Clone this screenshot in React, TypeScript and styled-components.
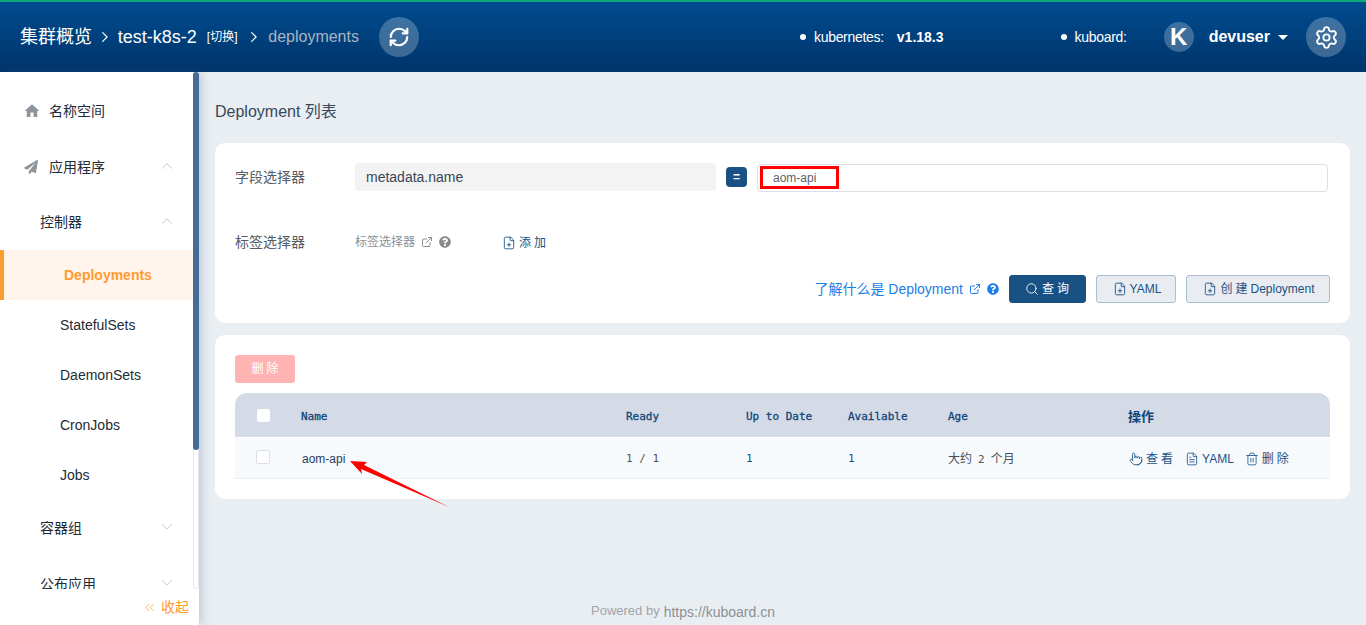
import React from 'react';
import styled, { createGlobalStyle } from 'styled-components';
import {
  ChevronDown,
  ChevronRight,
  ChevronUp,
  ChevronsLeft,
  ExternalLink,
  FilePlus,
  FileText,
  Pointer,
  RefreshCw,
  Search,
  Settings,
  Trash2,
} from 'lucide-react';
import { FaPaperPlane, FaQuestionCircle } from 'react-icons/fa';
import { MdHome } from 'react-icons/md';

const SANS = '"Liberation Sans", "Noto Sans CJK SC", sans-serif';
const MONO = '"DejaVu Sans Mono", "Noto Sans CJK SC", monospace';
const NAVY = '#1a5185';

const GlobalStyle = createGlobalStyle`
  html, body {
    margin: 0;
    padding: 0;
    height: 100%;
    overflow: hidden;
    font-family: ${SANS};
    line-height: 18px;
    background: #e9eef2;
  }
  #root {
    height: 100%;
  }
  button {
    line-height: inherit;
  }
`;

const Page = styled.div`
  width: 1366px;
  height: 625px;
  display: flex;
  flex-direction: column;
  overflow: hidden;
`;

const Header = styled.header`
  flex: none;
  height: 70px;
  border-top: 2px solid #0fa77b;
  background: linear-gradient(180deg, #004c90 0%, #00346a 100%);
  display: flex;
  align-items: center;
  padding: 0 20px;
  color: #fff;
`;

const Crumb = styled.span<{ $size?: number; $muted?: boolean; $gap?: number }>`
  font-size: ${(p) => p.$size ?? 18}px;
  color: ${(p) => (p.$muted ? '#a9b4c2' : '#fff')};
  margin-left: ${(p) => p.$gap ?? 0}px;
  white-space: nowrap;
`;

const CrumbArrow = styled(ChevronRight)<{ $gap: number }>`
  width: 18px;
  height: 18px;
  stroke-width: 1.6;
  margin-left: ${(p) => p.$gap}px;
  color: #fff;
`;

const RoundButton = styled.span<{ $size: number; $gap: number }>`
  flex: none;
  width: ${(p) => p.$size}px;
  height: ${(p) => p.$size}px;
  margin-left: ${(p) => p.$gap}px;
  border-radius: 50%;
  background: rgba(255, 255, 255, 0.24);
  display: flex;
  align-items: center;
  justify-content: center;
  font-size: 24px;
  font-weight: 700;
`;

const Status = styled.span<{ $gap: number }>`
  display: flex;
  align-items: center;
  margin-left: ${(p) => p.$gap}px;
  font-size: 14px;
  letter-spacing: -0.3px;
  white-space: nowrap;
  &::before {
    content: '';
    width: 6px;
    height: 6px;
    border-radius: 50%;
    background: #fff;
    margin-right: 8px;
  }
`;

const Version = styled.b`
  margin-left: 13px;
  letter-spacing: 0;
`;

const UserName = styled.b`
  margin-left: 15px;
  font-size: 16px;
`;

const Caret = styled.i`
  width: 0;
  height: 0;
  margin: 0 0 0 8px;
  border-left: 5px solid transparent;
  border-right: 5px solid transparent;
  border-top: 5px solid #fff;
`;

const Body = styled.div`
  flex: 1;
  min-height: 0;
  display: flex;
`;

const Sidebar = styled.aside`
  flex: none;
  width: 199px;
  position: relative;
  z-index: 1;
  display: flex;
  flex-direction: column;
  background: #fff;
  box-shadow: 3px 0 8px rgba(70, 108, 150, 0.25);
`;

const MenuScroll = styled.nav`
  flex: 1;
  min-height: 0;
  overflow: hidden;
  padding: 11px 6px 0 0;
`;

const ScrollTrack = styled.div`
  position: absolute;
  top: 0;
  right: 0;
  width: 6px;
  height: 517px;
  box-sizing: border-box;
  border: 1px solid #e6e9ee;
  border-top: 0;
  border-radius: 0 0 3px 3px;
`;

const ScrollThumb = styled.div`
  position: absolute;
  top: 0;
  left: -1px;
  right: -1px;
  height: 378px;
  background: #456c96;
  border-radius: 3px;
`;

const MenuRow = styled.div<{ $indent: number; $height?: number; $lift?: number }>`
  height: ${(p) => p.$height ?? 56}px;
  box-sizing: border-box;
  display: flex;
  align-items: center;
  padding-left: ${(p) => p.$indent}px;
  padding-bottom: ${(p) => p.$lift ?? 0}px;
  font-size: 14px;
  color: #222b36;
  white-space: nowrap;
`;

const MenuIcon = styled.span`
  width: 25px;
  display: flex;
  align-items: center;
  color: #8f959c;
`;

const MenuToggle = styled.span`
  margin: 0 17px 3px auto;
  display: flex;
  color: #a9b2bd;
  svg {
    width: 18px;
    height: 18px;
    stroke-width: 1;
  }
`;

const SubItem = styled.div<{ $active?: boolean }>`
  height: 50px;
  box-sizing: border-box;
  display: flex;
  align-items: center;
  font-size: 14px;
  padding-left: 60px;
  color: ${(p) => (p.$active ? '#ff9a2e' : '#222b36')};
  font-weight: ${(p) => (p.$active ? 700 : 400)};
  background: ${(p) => (p.$active ? '#fff5ec' : 'transparent')};
  border-left: ${(p) => (p.$active ? '4px solid #ff9a2e' : '0')};
`;

const Collapse = styled.div`
  flex: none;
  height: 36px;
  box-sizing: border-box;
  padding: 0 10px 0 0;
  display: flex;
  align-items: center;
  justify-content: flex-end;
  gap: 4px;
  font-size: 14px;
  color: #ff9a2e;
  svg {
    width: 15px;
    height: 15px;
    stroke-width: 1.2;
  }
`;

const Main = styled.main`
  flex: 1;
  min-width: 0;
  display: flex;
  flex-direction: column;
  padding: 0 16px;
`;

const PageTitle = styled.h1`
  margin: 0;
  height: 71px;
  box-sizing: border-box;
  padding-top: 9px;
  display: flex;
  align-items: center;
  font-size: 16px;
  font-weight: 400;
  color: #38495c;
`;

const Card = styled.section<{ $height: number }>`
  height: ${(p) => p.$height}px;
  box-sizing: border-box;
  padding: 20px;
  margin-bottom: 12px;
  background: #fff;
  border-radius: 10px;
`;

const FieldRow = styled.div`
  display: flex;
  align-items: center;
  height: 28px;
`;

const FormLabel = styled.span`
  width: 120px;
  flex: none;
  font-size: 14px;
  color: #555c66;
`;

const ReadonlyField = styled.div`
  width: 361px;
  height: 28px;
  box-sizing: border-box;
  padding-left: 11px;
  display: flex;
  align-items: center;
  border-radius: 4px;
  background: #f3f3f3;
  font-size: 14px;
  color: #3a4656;
`;

const EqualBadge = styled.span`
  width: 21px;
  height: 20px;
  margin-left: 10px;
  border-radius: 4px;
  background: ${NAVY};
  color: #fff;
  font-size: 12px;
  font-weight: 700;
  display: flex;
  align-items: center;
  justify-content: center;
`;

const ValueInput = styled.div`
  position: relative;
  flex: 1;
  height: 28px;
  margin: 1px 2px 0 10px;
  box-sizing: border-box;
  padding-left: 15px;
  display: flex;
  align-items: center;
  border: 1px solid #dcdfe6;
  border-radius: 4px;
  font-size: 12px;
  color: #606266;
`;

const RedMark = styled.span`
  position: absolute;
  left: 2px;
  top: 1px;
  width: 79px;
  height: 23px;
  box-sizing: border-box;
  border: 3px solid #f00;
`;

const SelectorRow = styled.div`
  display: flex;
  align-items: center;
  height: 28px;
  margin-top: 37px;
`;

const HintLink = styled.span`
  display: flex;
  align-items: center;
  gap: 6px;
  font-size: 12px;
  color: #8a8f96;
  svg {
    width: 12px;
    height: 12px;
  }
`;

const AddLink = styled.span`
  display: flex;
  align-items: center;
  gap: 3px;
  margin-left: 51px;
  padding-top: 2px;
  font-size: 12px;
  letter-spacing: 3px;
  color: ${NAVY};
  svg {
    width: 14px;
    height: 14px;
    stroke-width: 1.5;
  }
`;

const ActionRow = styled.div`
  display: flex;
  align-items: center;
  justify-content: flex-end;
  height: 28px;
  margin-top: 19px;
`;

const LearnLink = styled.span`
  display: flex;
  align-items: center;
  gap: 6px;
  font-size: 14px;
  color: #1a7fe8;
  svg {
    width: 12px;
    height: 12px;
  }
`;

const Button = styled.button<{ $primary?: boolean; $width: number; $gap?: number }>`
  width: ${(p) => p.$width}px;
  height: 28px;
  margin-left: ${(p) => p.$gap ?? 10}px;
  padding: 0 0 0 2px;
  box-sizing: border-box;
  display: flex;
  align-items: center;
  justify-content: center;
  gap: 3px;
  font-family: ${SANS};
  font-size: 12px;
  border-radius: 3px;
  border: 1px solid ${(p) => (p.$primary ? NAVY : '#a9bdd1')};
  background: ${(p) => (p.$primary ? NAVY : '#e9edf1')};
  color: ${(p) => (p.$primary ? '#fff' : NAVY)};
  svg {
    width: 14px;
    height: 14px;
    stroke-width: 1.5;
  }
`;

const Spaced = styled.span`
  letter-spacing: 3px;
`;

const DeleteButton = styled.button`
  display: block;
  width: 60px;
  height: 28px;
  padding: 0 0 1px 3px;
  border: 0;
  border-radius: 3px;
  background: #ffb3b3;
  color: #fff;
  font-family: ${SANS};
  font-size: 12px;
  letter-spacing: 3px;
`;

const TableGrid = styled.div`
  display: grid;
  grid-template-columns: 66px 325px 120px 102px 100px 180px 1fr;
  align-items: center;
`;

const TableHead = styled(TableGrid)`
  height: 44px;
  box-sizing: border-box;
  padding-top: 4px;
  margin-top: 10px;
  border-radius: 12px 12px 0 0;
  background: #d4dbe6;
  font-family: ${MONO};
  font-size: 11px;
  color: #12457a;
  -webkit-text-stroke: 0.3px #12457a;
`;

const TableRow = styled(TableGrid)`
  height: 41px;
  margin-top: 1px;
  box-sizing: border-box;
  padding-top: 2px;
  background: #f7fafc;
  border-bottom: 1px solid #e9edf1;
  font-family: ${MONO};
  font-size: 11px;
  color: #5c5346;
`;

const CheckCell = styled.span<{ $head?: boolean }>`
  display: block;
  box-sizing: border-box;
  width: ${(p) => (p.$head ? 13 : 14)}px;
  height: ${(p) => (p.$head ? 13 : 14)}px;
  margin: 0 0 4px ${(p) => (p.$head ? 22 : 21)}px;
  border-radius: 2px;
  background: #fff;
  border: ${(p) => (p.$head ? '0' : '1px solid #dcdfe6')};
`;

const NameCell = styled.span`
  padding-left: 1px;
  font-family: ${SANS};
  font-size: 12px;
  color: #26405f;
`;

const CountCell = styled.span`
  color: ${NAVY};
`;

const AgeCell = styled.span`
  font-family: ${SANS};
  font-size: 12px;
  color: #4a4f57;
  b {
    font-family: ${MONO};
    font-size: 11px;
    font-weight: 400;
    margin: 0 6px;
    color: #5c5346;
  }
`;

const OpsTitle = styled.span`
  font-family: ${SANS};
  font-size: 13px;
  font-weight: 700;
  -webkit-text-stroke: 0;
`;

const Ops = styled.span`
  display: flex;
  align-items: center;
  padding: 0 0 1px 1px;
  font-family: ${SANS};
  font-size: 12px;
  color: ${NAVY};
`;

const OpLink = styled.span<{ $spaced?: boolean; $after: number }>`
  display: flex;
  align-items: center;
  gap: 3px;
  margin-right: ${(p) => p.$after}px;
  letter-spacing: ${(p) => (p.$spaced ? 3 : 0)}px;
  svg {
    width: 14px;
    height: 14px;
    stroke-width: 1.4;
  }
`;

const Footer = styled.footer`
  margin: auto -16px 0 -215px;
  height: 26px;
  display: flex;
  align-items: center;
  justify-content: center;
  gap: 4px;
  font-size: 14px;
  color: #a0a4aa;
`;

const PoweredBy = styled.span`
  margin-bottom: 3px;
  font-size: 13px;
`;

const FooterLink = styled.span`
  color: #8d9095;
`;

const Annotation = styled.svg`
  position: absolute;
  left: 0;
  top: 0;
  width: 1366px;
  height: 625px;
  z-index: 2;
  pointer-events: none;
`;

const subItems = ['StatefulSets', 'DaemonSets', 'CronJobs', 'Jobs'];

export default function App() {
  return (
    <Page>
      <GlobalStyle />
      <Header>
        <Crumb>集群概览</Crumb>
        <CrumbArrow $gap={4} />
        <Crumb $gap={4}>test-k8s-2</Crumb>
        <Crumb $size={12} $gap={10}>[切换]</Crumb>
        <CrumbArrow $gap={8} />
        <Crumb $size={16} $muted $gap={5}>deployments</Crumb>
        <RoundButton $size={40} $gap={20}>
          <RefreshCw size={22} strokeWidth={2.4} />
        </RoundButton>
        <Status $gap={381}>
          kubernetes:
          <Version>v1.18.3</Version>
        </Status>
        <Status $gap={117}>kuboard:</Status>
        <RoundButton $size={30} $gap={37}>K</RoundButton>
        <UserName>devuser</UserName>
        <Caret />
        <RoundButton $size={40} $gap={18}>
          <Settings size={25} strokeWidth={1.8} />
        </RoundButton>
      </Header>
      <Body>
        <Sidebar>
          <MenuScroll>
            <MenuRow $indent={24}>
              <MenuIcon><MdHome size={18} style={{ marginLeft: -1 }} /></MenuIcon>
              名称空间
            </MenuRow>
            <MenuRow $indent={24}>
              <MenuIcon><FaPaperPlane size={14} /></MenuIcon>
              应用程序
              <MenuToggle><ChevronUp /></MenuToggle>
            </MenuRow>
            <MenuRow $indent={40} $height={55} $lift={1}>
              控制器
              <MenuToggle><ChevronUp /></MenuToggle>
            </MenuRow>
            <SubItem $active>Deployments</SubItem>
            {subItems.map((name) => (
              <SubItem key={name}>{name}</SubItem>
            ))}
            <MenuRow $indent={40}>
              容器组
              <MenuToggle><ChevronDown /></MenuToggle>
            </MenuRow>
            <MenuRow $indent={40}>
              公布应用
              <MenuToggle><ChevronDown /></MenuToggle>
            </MenuRow>
          </MenuScroll>
          <ScrollTrack>
            <ScrollThumb />
          </ScrollTrack>
          <Collapse>
            <ChevronsLeft />
            收起
          </Collapse>
        </Sidebar>
        <Main>
          <PageTitle>Deployment 列表</PageTitle>
          <Card $height={180}>
            <FieldRow>
              <FormLabel>字段选择器</FormLabel>
              <ReadonlyField>metadata.name</ReadonlyField>
              <EqualBadge>=</EqualBadge>
              <ValueInput>
                aom-api
                <RedMark />
              </ValueInput>
            </FieldRow>
            <SelectorRow>
              <FormLabel>标签选择器</FormLabel>
              <HintLink>
                标签选择器
                <ExternalLink />
                <FaQuestionCircle size={13} color="#8a8a8a" />
              </HintLink>
              <AddLink>
                <FilePlus />
                添加
              </AddLink>
            </SelectorRow>
            <ActionRow>
              <LearnLink>
                了解什么是 Deployment
                <ExternalLink />
                <FaQuestionCircle size={13} color="#1a7fe8" />
              </LearnLink>
              <Button $primary $width={77}>
                <Search />
                <Spaced>查询</Spaced>
              </Button>
              <Button $width={80}>
                <FilePlus />
                YAML
              </Button>
              <Button $width={144}>
                <FilePlus />
                <span><Spaced>创建</Spaced>Deployment</span>
              </Button>
            </ActionRow>
          </Card>
          <Card $height={164}>
            <DeleteButton>删除</DeleteButton>
            <TableHead>
              <CheckCell $head />
              <span>Name</span>
              <span>Ready</span>
              <span>Up to Date</span>
              <span>Available</span>
              <span>Age</span>
              <OpsTitle>操作</OpsTitle>
            </TableHead>
            <TableRow>
              <CheckCell />
              <NameCell>aom-api</NameCell>
              <span>1 / 1</span>
              <CountCell>1</CountCell>
              <CountCell>1</CountCell>
              <AgeCell>大约<b>2</b>个月</AgeCell>
              <Ops>
                <OpLink $spaced $after={9}><Pointer />查看</OpLink>
                <OpLink $after={11}><FileText />YAML</OpLink>
                <OpLink $spaced $after={0}><Trash2 />删除</OpLink>
              </Ops>
            </TableRow>
          </Card>
          <Footer>
            <PoweredBy>Powered by</PoweredBy>
            <FooterLink>https://kuboard.cn</FooterLink>
          </Footer>
        </Main>
      </Body>
      <Annotation viewBox="0 0 1366 625">
        <polygon points="350,461 367,462 364,465 449,507 361,469 362,474" fill="#f00" />
      </Annotation>
    </Page>
  );
}
